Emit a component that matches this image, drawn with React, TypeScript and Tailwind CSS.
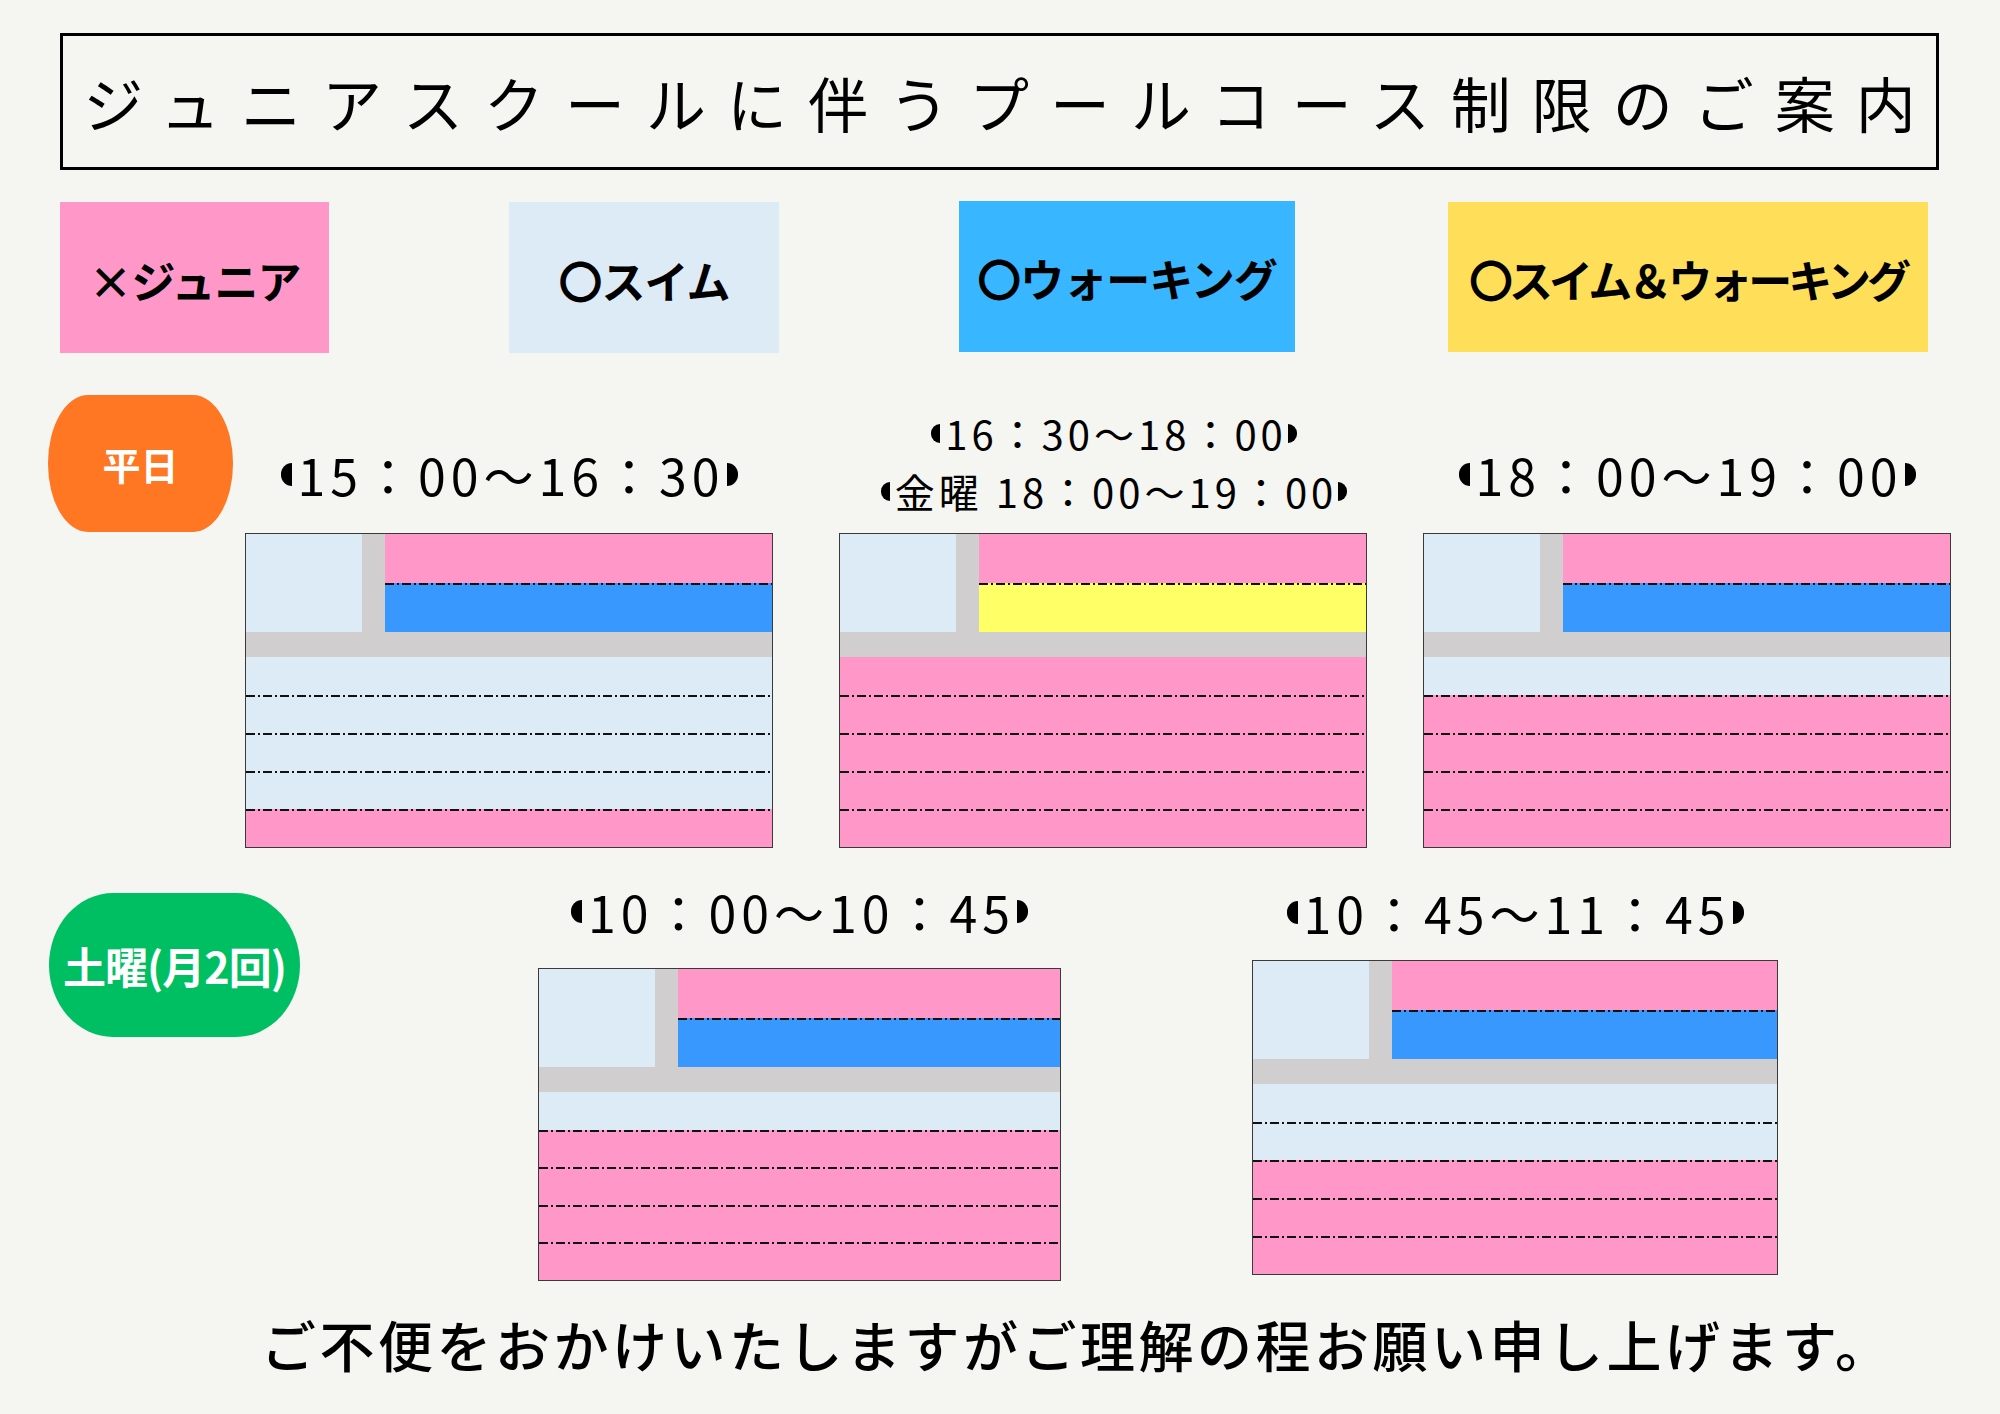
import React from "react";

const PINK = "bg-[#ff98c8]";
const LIGHT = "bg-[#ddebf7]";
const BLUE = "bg-[#3898fe]";
const YELLOW = "bg-[#ffff66]";

function Dash() {
  return (
    <div className="h-[2px] w-full bg-[image:repeating-linear-gradient(90deg,#111_0px,#111_9px,transparent_9px,transparent_12px,#111_12px,#111_14px,transparent_14px,transparent_17px)]" />
  );
}

function Pool({ size, top, lanes }: { size: string; top: string; lanes: string[] }) {
  return (
    <div className={`${size} flex flex-col border border-[#3a3a3a] overflow-hidden`}>
      <div className="h-[98px] flex">
        <div className={`w-[116px] ${LIGHT}`} />
        <div className="w-[23px] bg-[#d0cecf]" />
        <div className="flex-1 flex flex-col">
          <div className={`flex-1 ${PINK}`} />
          <div className={`flex-1 flex flex-col ${top}`}>
            <Dash />
          </div>
        </div>
      </div>
      <div className="h-[25px] bg-[#d0cecf]" />
      {lanes.map((c, i) => (
        <div key={i} className={`flex-1 flex flex-col ${c}`}>
          {i > 0 && <Dash />}
        </div>
      ))}
    </div>
  );
}

function TimeLabel({ text, big = true }: { text: string; big?: boolean }) {
  return (
    <div
      className={`flex items-center whitespace-nowrap leading-none text-black ${
        big ? "text-[50px] gap-[6px] tracking-[5px]" : "text-[40px] gap-[5px] tracking-[4px]"
      }`}
    >
      <span className={`${big ? "w-[11px] h-[23px]" : "w-[9px] h-[19px]"} bg-black rounded-l-full`} />
      <span>{text}</span>
      <span className={`${big ? "w-[11px] h-[23px]" : "w-[9px] h-[19px]"} bg-black rounded-r-full -ml-[4px]`} />
    </div>
  );
}

export default function App() {
  return (
    <div className="w-[2000px] h-[1414px] bg-[#f5f5f1] flex flex-col font-['Noto_Sans_CJK_JP',sans-serif] text-black overflow-hidden">
      {/* Title */}
      <div className="mt-[33px] ml-[60px] w-[1879px] h-[137px] border-[3px] border-black flex items-center justify-center">
        <span className="text-[60px] tracking-[21px] pl-[21px] leading-none whitespace-nowrap font-normal">
          ジュニアスクールに伴うプールコース制限のご案内
        </span>
      </div>

      {/* Legend */}
      <div className="mt-[32px] flex items-start font-bold text-[44px] leading-none tracking-[-1px]">
        <div className="ml-[60px] w-[269px] h-[151px] bg-[#ff98c8] flex items-center justify-center pt-[4px]">×ジュニア</div>
        <div className="ml-[180px] w-[270px] h-[151px] bg-[#ddebf7] flex items-center justify-center pt-[4px]">〇スイム</div>
        <div className="ml-[180px] w-[336px] h-[151px] -mt-[1px] bg-[#38b6ff] flex items-center justify-center pt-[2px]">〇ウォーキング</div>
        <div className="ml-[153px] w-[480px] h-[150px] bg-[#ffde59] flex items-center justify-center pt-[4px] tracking-[-4px]">〇スイム＆ウォーキング</div>
      </div>

      {/* Weekday row */}
      <div className="mt-[42px] flex items-start">
        <div className="ml-[48px] w-[185px] h-[137px] bg-[#ff7722] rounded-[40px/68px] flex items-center justify-center text-white font-bold text-[38px] leading-none">
          平日
        </div>
        <div className="ml-[12px] w-[528px] flex flex-col">
          <div className="h-[138px] flex items-center justify-center pt-[20px]">
            <TimeLabel text="15：00〜16：30" />
          </div>
          <Pool size="w-[528px] h-[315px]" top={BLUE} lanes={[LIGHT, LIGHT, LIGHT, LIGHT, PINK]} />
        </div>
        <div className="ml-[66px] w-[528px] flex flex-col">
          <div className="h-[138px] flex flex-col items-center justify-center gap-[18px] pl-[22px] pb-[4px]">
            <TimeLabel text="16：30〜18：00" big={false} />
            <TimeLabel text="金曜 18：00〜19：00" big={false} />
          </div>
          <Pool size="w-[528px] h-[315px]" top={YELLOW} lanes={[PINK, PINK, PINK, PINK, PINK]} />
        </div>
        <div className="ml-[56px] w-[528px] flex flex-col">
          <div className="h-[138px] flex items-center justify-center pt-[20px]">
            <TimeLabel text="18：00〜19：00" />
          </div>
          <Pool size="w-[528px] h-[315px]" top={BLUE} lanes={[LIGHT, PINK, PINK, PINK, PINK]} />
        </div>
      </div>

      {/* Saturday row */}
      <div className="mt-[45px] flex items-start">
        <div className="ml-[49px] w-[251px] h-[144px] bg-[#00bf63] rounded-[64px/72px] flex items-center justify-center text-white font-bold text-[43px] leading-none tracking-[-1px]">
          土曜(月2回)
        </div>
        <div className="ml-[238px] w-[523px] flex flex-col">
          <div className="h-[36px] flex items-center justify-center">
            <TimeLabel text="10：00〜10：45" />
          </div>
          <div className="mt-[39px]">
            <Pool size="w-[523px] h-[313px]" top={BLUE} lanes={[LIGHT, PINK, PINK, PINK, PINK]} />
          </div>
        </div>
        <div className="ml-[191px] w-[526px] flex flex-col">
          <div className="h-[38px] flex items-center justify-center">
            <TimeLabel text="10：45〜11：45" />
          </div>
          <div className="mt-[29px]">
            <Pool size="w-[526px] h-[315px]" top={BLUE} lanes={[LIGHT, LIGHT, PINK, PINK, PINK]} />
          </div>
        </div>
      </div>

      {/* Footer */}
      <div className="mt-[32px] pl-[261px] text-[55px] leading-[60px] tracking-[3.5px] font-medium whitespace-nowrap">
        ご不便をおかけいたしますがご理解の程お願い申し上げます。
      </div>
    </div>
  );
}
